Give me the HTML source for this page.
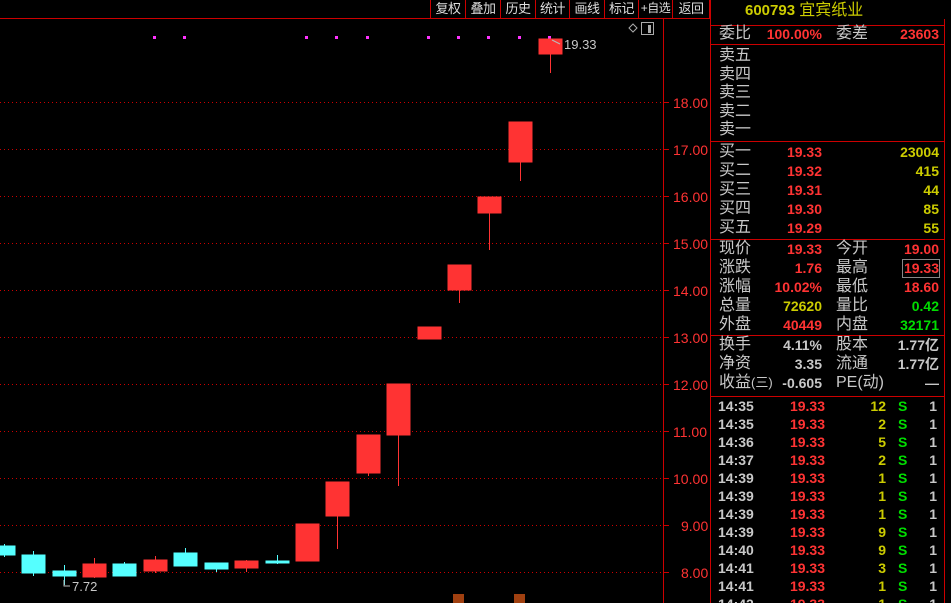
<!DOCTYPE html>
<html><head><meta charset="utf-8"><style>
*{margin:0;padding:0;box-sizing:border-box}
html,body{width:951px;height:603px;background:#000;overflow:hidden}
body{position:relative;font-family:"Liberation Sans","Noto Sans CJK SC",sans-serif}
.t{position:absolute;white-space:nowrap;line-height:18px;height:18px}
.lab{color:#c8c8c8;font-size:16px}
.n{font-weight:bold;font-size:14px;text-align:right}
.r{color:#ff3333}.y{color:#cccc00}.g{color:#00dd00}.w{color:#c8c8c8}
.tb{position:absolute;top:0;height:18px;color:#ddd;font-size:13px;line-height:17px;border-left:1px solid #c00;text-align:center;white-space:nowrap;overflow:hidden;letter-spacing:-0.5px}
.ax{color:#ff3333;font-size:14px}
</style></head><body>
<svg width="951" height="603" style="position:absolute;left:0;top:0">
<g stroke="#c00" stroke-width="1">
<line x1="0" y1="18.5" x2="710" y2="18.5"/>
<line x1="663.5" y1="19" x2="663.5" y2="603"/>
<line x1="710.5" y1="0" x2="710.5" y2="603"/>
<line x1="944.5" y1="19" x2="944.5" y2="603"/>
<line x1="711" y1="25.5" x2="944" y2="25.5"/>
<line x1="711" y1="44.5" x2="944" y2="44.5"/>
<line x1="711" y1="141.5" x2="944" y2="141.5"/>
<line x1="711" y1="239.5" x2="944" y2="239.5"/>
<line x1="711" y1="335.5" x2="944" y2="335.5"/>
<line x1="711" y1="396.5" x2="944" y2="396.5"/>
</g>
<g stroke="#c00" stroke-dasharray="1 3">
<line x1="0" y1="102.5" x2="663" y2="102.5"/><line x1="0" y1="149.5" x2="663" y2="149.5"/>
<line x1="0" y1="196.5" x2="663" y2="196.5"/><line x1="0" y1="243.5" x2="663" y2="243.5"/>
<line x1="0" y1="290.5" x2="663" y2="290.5"/><line x1="0" y1="337.5" x2="663" y2="337.5"/>
<line x1="0" y1="384.5" x2="663" y2="384.5"/><line x1="0" y1="431.5" x2="663" y2="431.5"/>
<line x1="0" y1="478.5" x2="663" y2="478.5"/><line x1="0" y1="525.5" x2="663" y2="525.5"/>
<line x1="0" y1="572.5" x2="663" y2="572.5"/>
</g>
<g stroke="#c00"><line x1="663" y1="102.5" x2="669" y2="102.5"/><line x1="663" y1="149.5" x2="669" y2="149.5"/><line x1="663" y1="196.5" x2="669" y2="196.5"/><line x1="663" y1="243.5" x2="669" y2="243.5"/><line x1="663" y1="290.5" x2="669" y2="290.5"/><line x1="663" y1="337.5" x2="669" y2="337.5"/><line x1="663" y1="384.5" x2="669" y2="384.5"/><line x1="663" y1="431.5" x2="669" y2="431.5"/><line x1="663" y1="478.5" x2="669" y2="478.5"/><line x1="663" y1="525.5" x2="669" y2="525.5"/><line x1="663" y1="572.5" x2="669" y2="572.5"/></g>
<g fill="#ff33ff"><rect x="153" y="36" width="3" height="3"/><rect x="183" y="36" width="3" height="3"/><rect x="305" y="36" width="3" height="3"/><rect x="335" y="36" width="3" height="3"/><rect x="366" y="36" width="3" height="3"/><rect x="427" y="36" width="3" height="3"/><rect x="457" y="36" width="3" height="3"/><rect x="487" y="36" width="3" height="3"/><rect x="518" y="36" width="3" height="3"/><rect x="548" y="36" width="3" height="3"/></g>
<g stroke="#55ffff" fill="#55ffff">
<line x1="4.5" y1="544" x2="4.5" y2="557"/><rect x="0" y="546" width="15" height="9"/>
<line x1="33.5" y1="551" x2="33.5" y2="576"/><rect x="22" y="555" width="23" height="18"/>
<line x1="64.5" y1="565" x2="64.5" y2="585"/><rect x="53" y="571" width="23" height="5"/>
<line x1="124.5" y1="562" x2="124.5" y2="576"/><rect x="113" y="564" width="23" height="12"/>
<line x1="185.5" y1="548" x2="185.5" y2="566"/><rect x="174" y="553" width="23" height="13"/>
<line x1="216.5" y1="563" x2="216.5" y2="572"/><rect x="205" y="563" width="23" height="6"/>
<line x1="277.5" y1="555" x2="277.5" y2="564"/><rect x="266" y="561" width="23" height="2"/>
</g>
<g stroke="#ff3333" fill="#ff3333">
<line x1="94.5" y1="558" x2="94.5" y2="578"/><rect x="83" y="564" width="23" height="13"/>
<line x1="155.5" y1="556" x2="155.5" y2="573"/><rect x="144" y="560" width="23" height="11"/>
<line x1="246.5" y1="560" x2="246.5" y2="572"/><rect x="235" y="561" width="23" height="7"/>
<rect x="296" y="524" width="23" height="37"/>
<line x1="337.5" y1="482" x2="337.5" y2="549"/><rect x="326" y="482" width="23" height="34"/>
<line x1="368.5" y1="435" x2="368.5" y2="476"/><rect x="357" y="435" width="23" height="38"/>
<line x1="398.5" y1="384" x2="398.5" y2="486"/><rect x="387" y="384" width="23" height="51"/>
<rect x="418" y="327" width="23" height="12"/>
<line x1="459.5" y1="265" x2="459.5" y2="303"/><rect x="448" y="265" width="23" height="25"/>
<line x1="489.5" y1="197" x2="489.5" y2="250"/><rect x="478" y="197" width="23" height="16"/>
<line x1="520.5" y1="122" x2="520.5" y2="181"/><rect x="509" y="122" width="23" height="40"/>
<line x1="550.5" y1="39" x2="550.5" y2="73"/><rect x="539" y="39" width="23" height="15"/>
</g>
<polyline points="552,40 560,44" stroke="#bbb" fill="none"/>
<polyline points="64,580 64,586 70,586" stroke="#bbb" fill="none"/>
<path d="M633 24 l4 4 -4 4 -4 -4z" stroke="#aaa" fill="none"/>
<rect x="641.5" y="22.5" width="12" height="12" stroke="#aaa" fill="none"/><rect x="648" y="25" width="3" height="8" fill="#aaa"/>
<rect x="453" y="594" width="11" height="9" fill="#a04010"/><rect x="514" y="594" width="11" height="9" fill="#a04010"/>
</svg>
<div class="t w" style="left:564px;top:36px;font-size:13px">19.33</div>
<div class="t w" style="left:72px;top:578px;font-size:13px">7.72</div>
<div class="t ax" style="left:673px;top:94px">18.00</div>
<div class="t ax" style="left:673px;top:141px">17.00</div>
<div class="t ax" style="left:673px;top:188px">16.00</div>
<div class="t ax" style="left:673px;top:235px">15.00</div>
<div class="t ax" style="left:673px;top:282px">14.00</div>
<div class="t ax" style="left:673px;top:329px">13.00</div>
<div class="t ax" style="left:673px;top:376px">12.00</div>
<div class="t ax" style="left:673px;top:423px">11.00</div>
<div class="t ax" style="left:673px;top:470px">10.00</div>
<div class="t ax" style="left:681px;top:517px">9.00</div>
<div class="t ax" style="left:681px;top:564px">8.00</div>
<div class="tb" style="left:430px;width:35px">复权</div>
<div class="tb" style="left:465px;width:35px">叠加</div>
<div class="tb" style="left:500px;width:35px">历史</div>
<div class="tb" style="left:535px;width:34px">统计</div>
<div class="tb" style="left:569px;width:35px">画线</div>
<div class="tb" style="left:604px;width:34px">标记</div>
<div class="tb" style="left:638px;width:34px;font-size:12px">+自选</div>
<div class="tb" style="left:672px;width:38px;border-right:1px solid #c00">返回</div>
<div class="t y" style="left:745px;top:2px;font-size:15px;font-weight:bold">600793 <span style="font-weight:normal;font-size:16px">宜宾纸业</span></div>
<div id="p"></div>
<script>
var h='';
function L(x,y,s,c){h+='<div class="t lab'+(c?' '+c:'')+'" style="left:'+x+'px;top:'+(y-9)+'px">'+s+'</div>'}
function N(x,y,s,c){h+='<div class="t n '+c+'" style="left:'+(x-90)+'px;width:90px;top:'+(y-9)+'px">'+s+'</div>'}
L(719,34,'委比');N(822,34,'100.00%','r');L(836,34,'委差');N(939,34,'23603','r');
['卖五','卖四','卖三','卖二','卖一'].forEach(function(s,i){L(719,56+i*18.6,s)});
var b=[['买一','19.33','23004'],['买二','19.32','415'],['买三','19.31','44'],['买四','19.30','85'],['买五','19.29','55']];
b.forEach(function(r,i){var y=152+i*19;L(719,y,r[0]);N(822,y,r[1],'r');N(939,y,r[2],'y')});
var q=[['现价','19.33','r','今开','19.00','r'],['涨跌','1.76','r','最高','19.33','r'],['涨幅','10.02%','r','最低','18.60','r'],['总量','72620','y','量比','0.42','g'],['外盘','40449','r','内盘','32171','g']];
q.forEach(function(r,i){var y=249+i*19;L(719,y,r[0]);N(822,y,r[1],r[2]);L(836,y,r[3]);N(939,y,r[4],r[5])});
h+='<div style="position:absolute;left:902px;top:259px;width:38px;height:19px;border:1px solid #888"></div>';
var z=[['换手','4.11%','股本','1.77亿'],['净资','3.35','流通','1.77亿'],['收益<span style="font-size:13px">(三)</span>','-0.605','PE(动)','—']];
z.forEach(function(r,i){var y=345+i*19;L(719,y,r[0]);N(822,y,r[1],'w');L(836,y,r[2]);N(939,y,r[3],'w')});
var tk=[['14:35','12'],['14:35','2'],['14:36','5'],['14:37','2'],['14:39','1'],['14:39','1'],['14:39','1'],['14:39','9'],['14:40','9'],['14:41','3'],['14:41','1'],['14:42','1']];
tk.forEach(function(r,i){var y=406+i*18;h+='<div class="t n w" style="left:718px;top:'+(y-9)+'px;text-align:left">'+r[0]+'</div>';N(825,y,'19.33','r');N(886,y,r[1],'y');h+='<div class="t n g" style="left:898px;top:'+(y-9)+'px;text-align:left">S</div>';N(937,y,'1','w')});
document.getElementById('p').innerHTML=h;
</script>
</body></html>
